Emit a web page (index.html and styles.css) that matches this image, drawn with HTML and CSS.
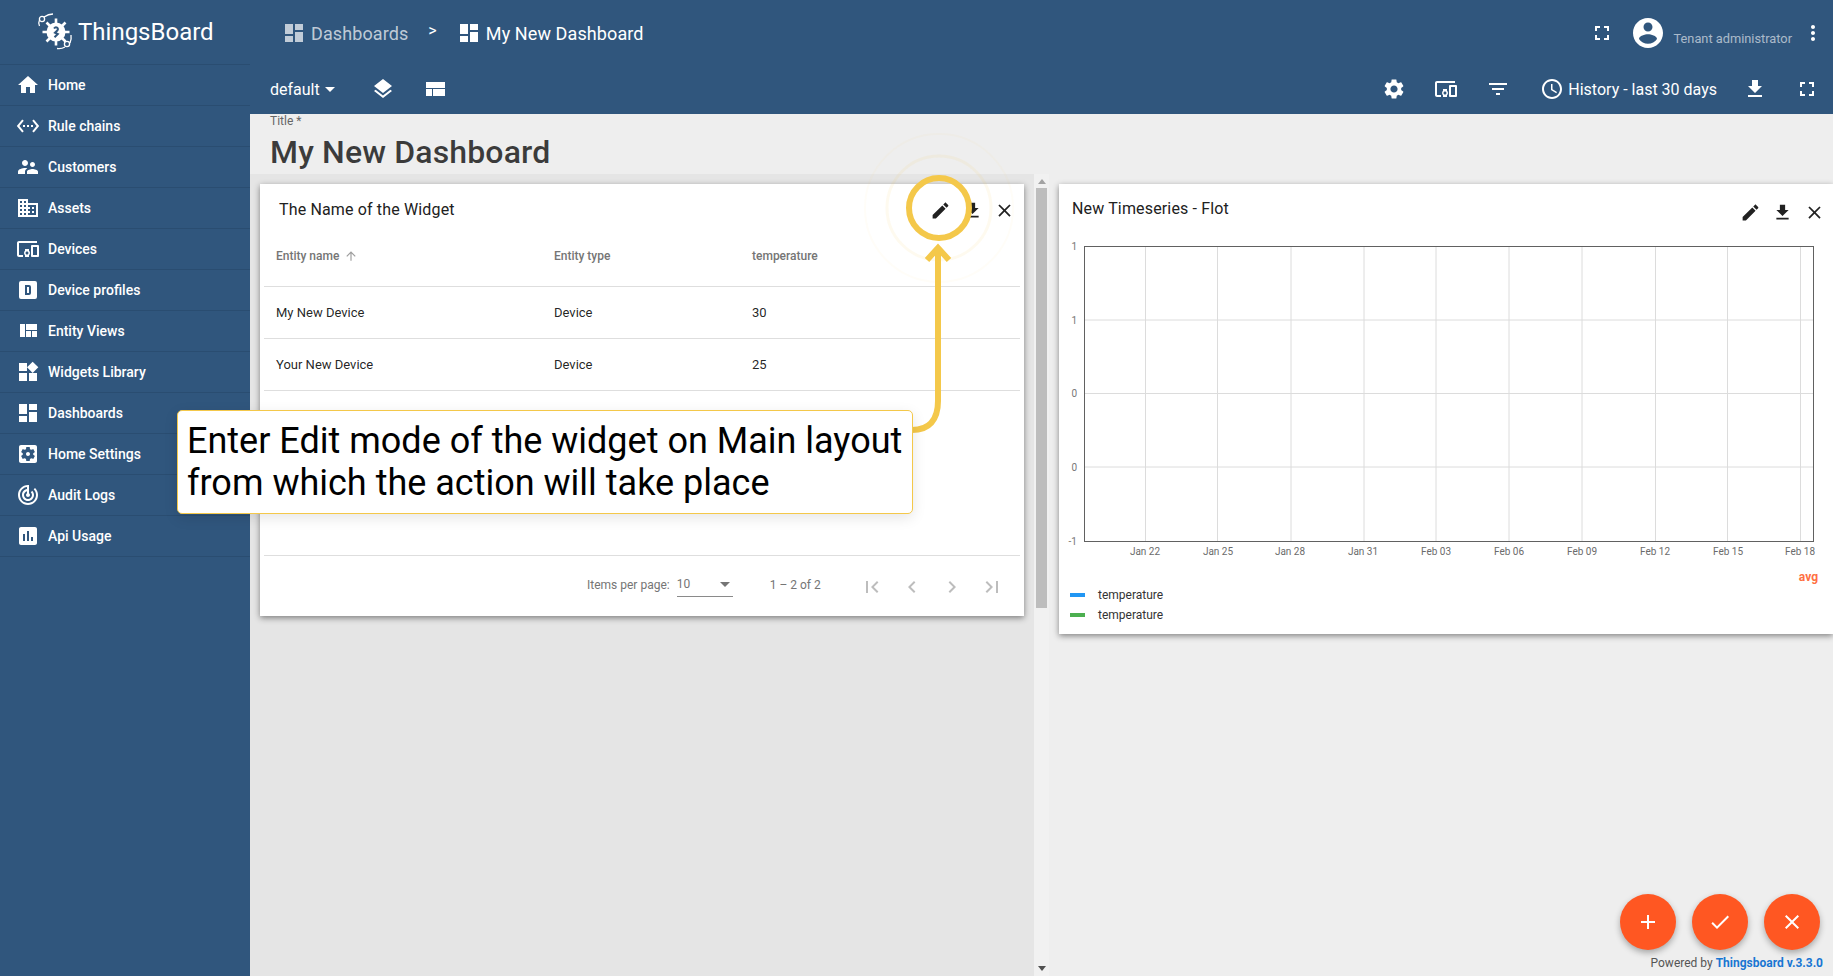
FILE: index.html
```html
<!DOCTYPE html>
<html lang="en">
<head>
  <meta charset="UTF-8">
  <title>ThingsBoard | My New Dashboard</title>
  <link rel="stylesheet" href="styles.css">
</head>
<body>

<svg class="sprite" xmlns="http://www.w3.org/2000/svg">
  <symbol id="i-home" viewBox="0 0 24 24"><path d="M10 20v-6h4v6h5v-8h3L12 3 2 12h3v8z"/></symbol>
  <symbol id="i-rule" viewBox="0 0 24 24"><path d="M7.77 6.76L6.23 5.48.82 12l5.41 6.52 1.54-1.28L3.42 12l4.35-5.24zM7 13h2v-2H7v2zm10-2h-2v2h2v-2zm-6 2h2v-2h-2v2zm6.77-7.52l-1.54 1.28L20.58 12l-4.35 5.24 1.54 1.28L23.18 12l-5.41-6.52z"/></symbol>
  <symbol id="i-customers" viewBox="0 0 24 24"><path d="M16.5 12c1.38 0 2.49-1.12 2.49-2.5S17.88 7 16.5 7C15.12 7 14 8.12 14 9.5s1.12 2.5 2.5 2.5zM9 11c1.66 0 2.99-1.34 2.99-3S10.66 5 9 5C7.34 5 6 6.34 6 8s1.34 3 3 3zm7.5 3c-1.83 0-5.5.92-5.5 2.75V19h11v-2.25c0-1.83-3.67-2.75-5.5-2.75zM9 13c-2.33 0-7 1.17-7 3.5V19h7v-2.25c0-.85.33-2.34 2.37-3.47C10.5 13.1 9.66 13 9 13z"/></symbol>
  <symbol id="i-domain" viewBox="0 0 24 24"><path d="M12 7V3H2v18h20V7H12zM6 19H4v-2h2v2zm0-4H4v-2h2v2zm0-4H4V9h2v2zm0-4H4V5h2v2zm4 12H8v-2h2v2zm0-4H8v-2h2v2zm0-4H8V9h2v2zm0-4H8V5h2v2zm10 12h-8v-2h2v-2h-2v-2h2v-2h-2V9h8v10zm-2-8h-2v2h2v-2zm0 4h-2v2h2v-2z"/></symbol>
  <symbol id="i-devices" viewBox="0 0 24 24"><path d="M3 6h18V4H3c-1.1 0-2 .9-2 2v12c0 1.1.9 2 2 2h4v-2H3V6zm10 6H9v1.78c-.61.55-1 1.33-1 2.22s.39 1.67 1 2.22V20h4v-1.78c.61-.55 1-1.34 1-2.22s-.39-1.67-1-2.22V12zm-2 5.5c-.83 0-1.5-.67-1.5-1.5s.67-1.5 1.5-1.5 1.5.67 1.5 1.5-.67 1.5-1.5 1.5zM22 8h-6c-.5 0-1 .5-1 1v10c0 .5.5 1 1 1h6c.5 0 1-.5 1-1V9c0-.5-.5-1-1-1zm-1 10h-4v-8h4v8z"/></symbol>
  <symbol id="i-profile" viewBox="0 0 24 24"><path fill-rule="evenodd" d="M9 7v10h4a2 2 0 0 0 2-2V9a2 2 0 0 0-2-2H9zm2 2h2v6h-2V9zM5 3h14a2 2 0 0 1 2 2v14a2 2 0 0 1-2 2H5a2 2 0 0 1-2-2V5a2 2 0 0 1 2-2z"/></symbol>
  <symbol id="i-quilt" viewBox="0 0 24 24"><path d="M10 18h5v-6h-5v6zm-6 0h5V5H4v13zm12 0h5v-6h-5v6zM10 5v6h11V5H10z"/></symbol>
  <symbol id="i-widgets" viewBox="0 0 24 24"><path d="M13 13v8h8v-8h-8zM3 21h8v-8H3v8zM3 3v8h8V3H3zm13.66-1.31L11 7.34 16.66 13l5.66-5.66-5.66-5.65z"/></symbol>
  <symbol id="i-dashboard" viewBox="0 0 24 24"><path d="M3 13h8V3H3v10zm0 8h8v-6H3v6zm10 0h8V11h-8v10zm0-18v6h8V3h-8z"/></symbol>
  <symbol id="i-home-settings" viewBox="0 0 24 24"><path d="M12 10c-1.1 0-2 .9-2 2s.9 2 2 2 2-.9 2-2-.9-2-2-2zm7-7H5c-1.11 0-2 .9-2 2v14c0 1.1.89 2 2 2h14c1.11 0 2-.9 2-2V5c0-1.1-.89-2-2-2zm-1.75 9c0 .23-.02.46-.05.68l1.48 1.16c.13.11.17.3.08.45l-1.4 2.42c-.09.15-.27.21-.43.15l-1.74-.7c-.36.28-.76.51-1.18.69l-.26 1.85c-.03.17-.18.3-.35.3h-2.8c-.17 0-.32-.13-.35-.29l-.26-1.85c-.43-.18-.82-.41-1.18-.69l-1.74.7c-.16.06-.34 0-.43-.15l-1.4-2.42c-.09-.15-.05-.34.08-.45l1.48-1.16c-.03-.23-.05-.46-.05-.69 0-.23.02-.46.05-.68l-1.48-1.16c-.13-.11-.17-.3-.08-.45l1.4-2.42c.09-.15.27-.21.43-.15l1.74.7c.36-.28.76-.51 1.18-.69l.26-1.85c.03-.17.18-.3.35-.3h2.8c.17 0 .32.13.35.29l.26 1.85c.43.18.82.41 1.18.69l1.74-.7c.16-.06.34 0 .43.15l1.4 2.42c.09.15.05.34-.08.45l-1.48 1.16c.03.23.05.46.05.69z"/></symbol>
  <symbol id="i-audit" viewBox="0 0 24 24"><path d="M19.07 4.93l-1.41 1.41C19.1 7.79 20 9.79 20 12c0 4.42-3.58 8-8 8s-8-3.58-8-8c0-4.08 3.05-7.44 7-7.93v2.02C8.16 6.57 6 9.03 6 12c0 3.31 2.69 6 6 6s6-2.69 6-6c0-1.66-.67-3.16-1.76-4.24l-1.41 1.41C15.55 9.9 16 10.9 16 12c0 2.21-1.79 4-4 4s-4-1.79-4-4c0-1.86 1.28-3.41 3-3.86v2.14c-.6.35-1 .98-1 1.72 0 1.1.9 2 2 2s2-.9 2-2c0-.74-.4-1.38-1-1.72V2h-1C6.48 2 2 6.48 2 12s4.48 10 10 10 10-4.48 10-10c0-2.76-1.12-5.26-2.93-7.07z"/></symbol>
  <symbol id="i-usage" viewBox="0 0 24 24"><path d="M19 3H5c-1.1 0-2 .9-2 2v14c0 1.1.9 2 2 2h14c1.1 0 2-.9 2-2V5c0-1.1-.9-2-2-2zM9 17H7v-7h2v7zm4 0h-2V7h2v10zm4 0h-2v-4h2v4z"/></symbol>
  <symbol id="i-fullscreen" viewBox="0 0 24 24"><path d="M7 14H5v5h5v-2H7v-3zm-2-4h2V7h3V5H5v5zm12 7h-3v2h5v-5h-2v3zM14 5v2h3v3h2V5h-5z"/></symbol>
  <symbol id="i-account" viewBox="0 0 24 24"><path d="M12 2C6.48 2 2 6.48 2 12s4.48 10 10 10 10-4.48 10-10S17.52 2 12 2zm0 3c1.66 0 3 1.34 3 3s-1.34 3-3 3-3-1.34-3-3 1.34-3 3-3zm0 14.2c-2.5 0-4.71-1.28-6-3.22.03-1.99 4-3.08 6-3.08 1.99 0 5.97 1.09 6 3.08-1.29 1.94-3.5 3.22-6 3.22z"/></symbol>
  <symbol id="i-more" viewBox="0 0 24 24"><path d="M12 8c1.1 0 2-.9 2-2s-.9-2-2-2-2 .9-2 2 .9 2 2 2zm0 2c-1.1 0-2 .9-2 2s.9 2 2 2 2-.9 2-2-.9-2-2-2zm0 6c-1.1 0-2 .9-2 2s.9 2 2 2 2-.9 2-2-.9-2-2-2z"/></symbol>
  <symbol id="i-settings" viewBox="0 0 24 24"><path d="M19.14 12.94c.04-.3.06-.61.06-.94 0-.32-.02-.64-.07-.94l2.03-1.58c.18-.14.23-.41.12-.61l-1.92-3.32c-.12-.22-.37-.29-.59-.22l-2.39.96c-.5-.38-1.03-.7-1.62-.94L14.4 2.81c-.04-.24-.24-.41-.48-.41h-3.84c-.24 0-.43.17-.47.41L9.25 5.35c-.59.24-1.13.57-1.62.94l-2.39-.96c-.22-.08-.47 0-.59.22L2.74 8.87c-.12.21-.08.47.12.61l2.03 1.58c-.05.3-.09.63-.09.94s.02.64.07.94l-2.03 1.58c-.18.14-.23.41-.12.61l1.92 3.32c.12.22.37.29.59.22l2.39-.96c.5.38 1.03.7 1.62.94l.36 2.54c.05.24.24.41.48.41h3.84c.24 0 .44-.17.47-.41l.36-2.54c.59-.24 1.13-.56 1.62-.94l2.39.96c.22.08.47 0 .59-.22l1.92-3.32c.12-.22.07-.47-.12-.61l-2.01-1.58zM12 15.6c-1.98 0-3.6-1.62-3.6-3.6s1.62-3.6 3.6-3.6 3.6 1.62 3.6 3.6-1.62 3.6-3.6 3.6z"/></symbol>
  <symbol id="i-filter" viewBox="0 0 24 24"><path d="M10 18h4v-2h-4v2zM3 6v2h18V6H3zm3 7h12v-2H6v2z"/></symbol>
  <symbol id="i-schedule" viewBox="0 0 24 24"><path d="M11.99 2C6.47 2 2 6.48 2 12s4.47 10 9.99 10C17.52 22 22 17.52 22 12S17.52 2 11.99 2zM12 20c-4.42 0-8-3.58-8-8s3.58-8 8-8 8 3.58 8 8-3.58 8-8 8zm.5-13H11v6l5.25 3.15.75-1.23-4.5-2.67z"/></symbol>
  <symbol id="i-download" viewBox="0 0 24 24"><path d="M19 9h-4V3H9v6H5l7 7 7-7zM5 18v2h14v-2H5z"/></symbol>
  <symbol id="i-edit" viewBox="0 0 24 24"><path d="M3 17.25V21h3.75L17.81 9.94l-3.75-3.75L3 17.25zM20.71 7.04c.39-.39.39-1.02 0-1.41l-2.34-2.34c-.39-.39-1.02-.39-1.41 0l-1.83 1.83 3.75 3.75 1.83-1.83z"/></symbol>
  <symbol id="i-close" viewBox="0 0 24 24"><path d="M19 6.41L17.59 5 12 10.59 6.41 5 5 6.41 10.59 12 5 17.59 6.41 19 12 13.41 17.59 19 19 17.59 13.41 12z"/></symbol>
  <symbol id="i-layers" viewBox="0 0 24 24"><path d="M11.99 18.54l-7.37-5.73L3 14.07l9 7 9-7-1.63-1.27-7.38 5.74zM12 16l7.36-5.73L21 9l-9-7-9 7 1.63 1.27L12 16z"/></symbol>
  <symbol id="i-compact" viewBox="0 0 24 24"><path d="M3 19h6v-7H3v7zm7 0h12v-7H10v7zM3 5v6h19V5H3z"/></symbol>
  <symbol id="i-up" viewBox="0 0 24 24"><path d="M4 12l1.41 1.41L11 7.83V20h2V7.83l5.58 5.59L20 12l-8-8-8 8z"/></symbol>
  <symbol id="i-first" viewBox="0 0 24 24"><path d="M18.41 16.59L13.82 12l4.59-4.59L17 6l-6 6 6 6zM6 6h2v12H6z"/></symbol>
  <symbol id="i-prev" viewBox="0 0 24 24"><path d="M15.41 7.41L14 6l-6 6 6 6 1.41-1.41L10.83 12z"/></symbol>
  <symbol id="i-next" viewBox="0 0 24 24"><path d="M10 6L8.59 7.41 13.17 12l-4.58 4.59L10 18l6-6z"/></symbol>
  <symbol id="i-last" viewBox="0 0 24 24"><path d="M5.59 7.41L10.18 12l-4.59 4.59L7 18l6-6-6-6zM16 6h2v12h-2z"/></symbol>
  <symbol id="i-add" viewBox="0 0 24 24"><path d="M19 13h-6v6h-2v-6H5v-2h6V5h2v6h6v2z"/></symbol>
  <symbol id="i-check" viewBox="0 0 24 24"><path d="M9 16.17L4.83 12l-1.42 1.41L9 19 21 7l-1.41-1.41z"/></symbol>
</svg>

<div class="app">

  <aside class="sidebar">
    <div class="logo">
      <svg class="logo-mark" viewBox="0 0 38 38" fill="none" stroke="#fff">
        <circle cx="19" cy="19" r="9.500" fill="#fff" stroke="none"/>
        <path stroke-width="2.600" d="M19 5.500v5M19 27.500v5M5.500 19h5M27.500 19h5M9.500 9.500l3.500 3.500M25 25l3.500 3.500M28.500 9.500L25 13M13 25l-3.500 3.500"/>
        <path stroke="#30567d" stroke-width="2" d="M17 15.500c2-2.500 5-.5 3.500 1.800l-2.500 2.400 2.800 1.300-3.300 3.300"/>
        <circle cx="5" cy="6" r="2.600" stroke-width="1.300"/>
        <path stroke-width="1.300" d="M2.500 7c-1 2-1 4 0 6M7 4c3-2 6-3 9-3"/>
        <circle cx="30" cy="31" r="2.600" stroke-width="1.300"/>
        <path stroke-width="1.300" d="M33 30c1-2.500 1.500-5 1-8M28 34c-2.500 1.500-5 2-8 1.500"/>
      </svg>
      <span class="logo-text">ThingsBoard</span>
    </div>
    <nav>
      <a class="nav-item"><svg class="icon"><use href="#i-home"/></svg>Home</a>
      <a class="nav-item"><svg class="icon"><use href="#i-rule"/></svg>Rule chains</a>
      <a class="nav-item"><svg class="icon"><use href="#i-customers"/></svg>Customers</a>
      <a class="nav-item"><svg class="icon"><use href="#i-domain"/></svg>Assets</a>
      <a class="nav-item"><svg class="icon"><use href="#i-devices"/></svg>Devices</a>
      <a class="nav-item"><svg class="icon"><use href="#i-profile"/></svg>Device profiles</a>
      <a class="nav-item"><svg class="icon"><use href="#i-quilt"/></svg>Entity Views</a>
      <a class="nav-item"><svg class="icon"><use href="#i-widgets"/></svg>Widgets Library</a>
      <a class="nav-item"><svg class="icon"><use href="#i-dashboard"/></svg>Dashboards</a>
      <a class="nav-item"><svg class="icon"><use href="#i-home-settings"/></svg>Home Settings</a>
      <a class="nav-item"><svg class="icon"><use href="#i-audit"/></svg>Audit Logs</a>
      <a class="nav-item"><svg class="icon"><use href="#i-usage"/></svg>Api Usage</a>
    </nav>
  </aside>

  <main class="main">
    <header class="topbar">
      <div class="crumbs">
        <svg class="icon crumb-dim"><use href="#i-dashboard"/></svg>
        <span class="crumb-dim">Dashboards</span>
        <span class="crumb-sep">&gt;</span>
        <svg class="icon"><use href="#i-dashboard"/></svg>
        <span>My New Dashboard</span>
      </div>
      <div class="user-box">
        <svg class="icon"><use href="#i-fullscreen"/></svg>
        <svg class="icon avatar"><use href="#i-account"/></svg>
        <span class="user-role">Tenant administrator</span>
        <svg class="icon"><use href="#i-more"/></svg>
      </div>
    </header>

    <div class="toolbar">
      <div class="toolbar-left">
        <span class="state">default<i class="caret"></i></span>
        <svg class="icon layers-btn"><use href="#i-layers"/></svg>
        <svg class="icon layout-btn"><use href="#i-compact"/></svg>
      </div>
      <div class="toolbar-right">
        <svg class="icon"><use href="#i-settings"/></svg>
        <svg class="icon"><use href="#i-devices"/></svg>
        <svg class="icon"><use href="#i-filter"/></svg>
        <span class="history"><svg class="icon"><use href="#i-schedule"/></svg>History - last 30 days</span>
        <svg class="icon"><use href="#i-download"/></svg>
        <svg class="icon"><use href="#i-fullscreen"/></svg>
      </div>
    </div>

    <div class="title-box">
      <label>Title *</label>
      <h1>My New Dashboard</h1>
    </div>

    <div class="layouts">
      <section class="layout-main">
        <div class="widget widget-table">
          <div class="widget-head">
            <span class="widget-title">The Name of the Widget</span>
            <div class="widget-actions">
              <svg class="icon"><use href="#i-edit"/></svg>
              <svg class="icon"><use href="#i-download"/></svg>
              <svg class="icon"><use href="#i-close"/></svg>
            </div>
          </div>
          <div class="table">
            <div class="row row-head">
              <span class="col-name">Entity name<svg class="icon sort"><use href="#i-up"/></svg></span>
              <span class="col-type">Entity type</span>
              <span>temperature</span>
            </div>
            <div class="row">
              <span class="col-name">My New Device</span>
              <span class="col-type">Device</span>
              <span>30</span>
            </div>
            <div class="row">
              <span class="col-name">Your New Device</span>
              <span class="col-type">Device</span>
              <span>25</span>
            </div>
          </div>
          <div class="paginator">
            <span>Items per page:</span>
            <span class="page-select">10<i class="caret"></i></span>
            <span class="page-range">1 – 2 of 2</span>
            <svg class="icon"><use href="#i-first"/></svg>
            <svg class="icon"><use href="#i-prev"/></svg>
            <svg class="icon"><use href="#i-next"/></svg>
            <svg class="icon"><use href="#i-last"/></svg>
          </div>
        </div>
      </section>

      <div class="scrollbar">
        <i class="scroll-up"></i>
        <div class="scroll-thumb"></div>
        <i class="scroll-down"></i>
      </div>

      <section class="layout-right">
        <div class="widget widget-chart">
          <div class="widget-head">
            <span class="widget-title">New Timeseries - Flot</span>
            <div class="widget-actions">
              <svg class="icon"><use href="#i-edit"/></svg>
              <svg class="icon"><use href="#i-download"/></svg>
              <svg class="icon"><use href="#i-close"/></svg>
            </div>
          </div>
          <svg class="chart" width="774" height="330" viewBox="1059 235 774 330">
            <g class="grid">
              <path d="M1084 320H1813M1084 393.500H1813M1084 467H1813"/>
              <path d="M1145.500 246V541M1217.500 246V541M1291 246V541M1364 246V541M1436 246V541M1509 246V541M1582 246V541M1655.500 246V541M1727.500 246V541M1800.500 246V541"/>
            </g>
            <rect class="plot" x="1084.500" y="246.500" width="729" height="295"/>
            <g class="y-labels">
              <text x="1077" y="250">1</text>
              <text x="1077" y="324">1</text>
              <text x="1077" y="397">0</text>
              <text x="1077" y="471">0</text>
              <text x="1077" y="545">-1</text>
            </g>
            <g class="x-labels">
              <text x="1145" y="555">Jan 22</text>
              <text x="1218" y="555">Jan 25</text>
              <text x="1290" y="555">Jan 28</text>
              <text x="1363" y="555">Jan 31</text>
              <text x="1436" y="555">Feb 03</text>
              <text x="1509" y="555">Feb 06</text>
              <text x="1582" y="555">Feb 09</text>
              <text x="1655" y="555">Feb 12</text>
              <text x="1728" y="555">Feb 15</text>
              <text x="1800" y="555">Feb 18</text>
            </g>
          </svg>
          <div class="avg">avg</div>
          <ul class="legend">
            <li><i class="swatch swatch-blue"></i>temperature</li>
            <li><i class="swatch swatch-green"></i>temperature</li>
          </ul>
        </div>
      </section>
    </div>
  </main>
</div>

<div class="fabs">
  <button class="fab"><svg class="icon"><use href="#i-add"/></svg></button>
  <button class="fab"><svg class="icon"><use href="#i-check"/></svg></button>
  <button class="fab"><svg class="icon"><use href="#i-close"/></svg></button>
</div>
<div class="powered">Powered by <b>Thingsboard v.3.3.0</b></div>

<!-- annotation over the page -->
<svg class="marker" width="200" height="340" viewBox="0 0 200 340" fill="none">
  <circle class="halo-far" cx="100" cy="100" r="74"/>
  <circle class="halo-near" cx="100" cy="100" r="52"/>
  <circle class="ring" cx="100" cy="100" r="30"/>
  <path class="arrow" d="M99 142V293C99 312 90 322 73 322"/>
  <path class="arrow" d="M88 152L99 140L110 152"/>
</svg>
<div class="callout">Enter Edit mode of the widget on Main layout<br>from which the action will take place</div>

</body>
</html>
```

FILE: styles.css
```css
* {
  box-sizing: border-box;
}

html, body {
  height: 100%;
}

body {
  margin: 0;
  overflow: hidden;
  font-family: Roboto, "Liberation Sans", sans-serif;
  color: #212121;
  background: #eee;
}

.sprite {
  display: none;
}

.icon {
  width: 24px;
  height: 24px;
  flex: none;
  fill: currentColor;
}

.app {
  display: flex;
  height: 976px;
}

/* sidebar */
.sidebar {
  width: 250px;
  flex: none;
  background: #30567d;
  color: #fff;
}

.logo {
  height: 65px;
  display: flex;
  align-items: center;
  padding-left: 37px;
  border-bottom: 1px solid #2a4d71;
}

.logo-mark {
  width: 38px;
  height: 38px;
  margin-right: 3px;
}

.logo-text {
  font-size: 24px;
  font-weight: 400;
}

.nav-item {
  height: 41px;
  display: flex;
  align-items: center;
  gap: 8px;
  padding-left: 16px;
  font-size: 14px;
  font-weight: 500;
  border-bottom: 1px solid #2a4d71;
}

/* top bars */
.main {
  flex: 1;
  min-width: 0;
  display: flex;
  flex-direction: column;
}

.topbar {
  height: 64px;
  flex: none;
  display: flex;
  justify-content: space-between;
  align-items: center;
  background: #30567d;
  color: #fff;
  padding: 2px 8px 0 32px;
}

.crumbs {
  display: flex;
  align-items: center;
  gap: 5px;
  font-size: 18px;
  letter-spacing: 0.1px;
}

.crumb-dim {
  color: rgba(255, 255, 255, 0.7);
}

.crumb-sep {
  margin: -6px 15px 0 15px;
  font-size: 16px;
}

.user-box {
  display: flex;
  align-items: center;
}

.avatar {
  width: 36px;
  height: 36px;
  margin-left: 16px;
}

.user-role {
  font-size: 12.800px;
  color: rgba(255, 255, 255, 0.6);
  margin: 10px 9px 0 8px;
}

.toolbar {
  height: 50px;
  flex: none;
  display: flex;
  justify-content: space-between;
  align-items: center;
  background: #30567d;
  color: #fff;
  padding: 0 14px 0 20px;
}

.toolbar-left,
.toolbar-right {
  display: flex;
  align-items: center;
}

.toolbar-right {
  gap: 28px;
}

.state {
  font-size: 16px;
  display: flex;
  align-items: center;
}

.state .caret {
  margin-left: 5px;
  border-left: 5px solid transparent;
  border-right: 5px solid transparent;
  border-top: 5px solid #fff;
}

.layers-btn {
  margin-left: 36px;
}

.layout-btn {
  margin-left: 28px;
}

.history {
  display: flex;
  align-items: center;
  gap: 4px;
  margin: 0 -2px 0 2px;
  font-size: 16px;
}

/* title */
.title-box {
  height: 60px;
  flex: none;
  padding-left: 20px;
}

.title-box label {
  display: block;
  font-size: 12px;
  color: #666;
  line-height: 14px;
}

.title-box h1 {
  margin: 5px 0 0;
  font-size: 32px;
  font-weight: 500;
  line-height: 38px;
  letter-spacing: 0.15px;
  color: rgba(0, 0, 0, 0.76);
}

/* widget layouts */
.layouts {
  flex: 1;
  min-height: 0;
  display: flex;
}

.layout-main {
  width: 784px;
  flex: none;
  background: #e5e5e5;
  padding: 10px;
}

.scrollbar {
  width: 15px;
  flex: none;
  background: #f1f1f1;
  display: flex;
  flex-direction: column;
  align-items: center;
}

.scroll-up,
.scroll-down {
  width: 0;
  height: 0;
  border-left: 4px solid transparent;
  border-right: 4px solid transparent;
}

.scroll-up {
  margin: 5px 0 4px;
  border-bottom: 5px solid #a3a3a3;
}

.scroll-down {
  margin: auto 0 5px;
  border-top: 5px solid #505050;
}

.scroll-thumb {
  width: 11px;
  height: 420px;
  background: #bdbdbd;
}

.layout-right {
  flex: 1;
  min-width: 0;
  padding: 10px 0 0 10px;
}

.widget {
  background: #fff;
  box-shadow: 0 2px 6px rgba(0, 0, 0, 0.45);
}

.widget-table {
  height: 432px;
  padding: 0 4px;
  display: flex;
  flex-direction: column;
}

.widget-chart {
  height: 450px;
}

.widget-head {
  display: flex;
  justify-content: space-between;
  align-items: center;
}

.widget-table .widget-head {
  height: 50px;
  padding: 0 5px 0 15px;
}

.widget-chart .widget-head {
  height: 51px;
  padding: 0 8px 0 13px;
}

.widget-chart .widget-title {
  margin-top: -2px;
}

.widget-title {
  font-size: 16px;
  letter-spacing: 0.15px;
}

.widget-actions {
  display: flex;
  gap: 11px;
  color: #212121;
}

.widget-table .widget-actions {
  margin-top: 2px;
}

.widget-chart .widget-actions {
  margin-top: 6px;
}

.widget-actions .icon {
  width: 21px;
  height: 21px;
}

.table {
  flex: 1;
  font-size: 13px;
  color: rgba(0, 0, 0, 0.87);
  border-bottom: 1px solid #dedede;
}

.row {
  height: 52px;
  display: flex;
  align-items: center;
  padding-left: 12px;
  border-bottom: 1px solid #dedede;
}

.row-head {
  height: 53px;
  padding-bottom: 9px;
  font-size: 12px;
  font-weight: 500;
  color: #757575;
}

.col-name {
  width: 278px;
  display: flex;
  align-items: center;
}

.col-type {
  width: 198px;
}

.sort {
  width: 14px;
  height: 14px;
  margin-left: 5px;
  color: #9e9e9e;
}

.paginator {
  height: 60px;
  flex: none;
  display: flex;
  align-items: center;
  padding: 0 0 3px 323px;
  font-size: 12px;
  color: #757575;
}

.page-select {
  width: 56px;
  height: 24px;
  margin-left: 7px;
  display: flex;
  align-items: center;
  justify-content: space-between;
  border-bottom: 1px solid #8a8a8a;
  padding: 0 3px 0 0;
}

.page-select .caret {
  border-left: 5px solid transparent;
  border-right: 5px solid transparent;
  border-top: 5px solid #757575;
}

.page-range {
  margin: 0 39px 0 37px;
}

.paginator .icon {
  width: 24px;
  height: 24px;
  margin-right: 16px;
  margin-top: 4px;
  color: #bdbdbd;
}

/* chart */
.chart {
  display: block;
  margin-bottom: 5px;
}

.grid path {
  fill: none;
  stroke: #dcdcdc;
  stroke-width: 1;
}

.plot {
  fill: none;
  stroke: #616161;
  stroke-width: 1;
}

.y-labels text {
  font-size: 10px;
  fill: #777;
  text-anchor: end;
}

.x-labels text {
  font-size: 10px;
  fill: #6b6b6b;
  text-anchor: middle;
}

.avg {
  text-align: right;
  padding-right: 15px;
  font-size: 12px;
  font-weight: 700;
  line-height: 14px;
  color: #ff7043;
}

.legend {
  list-style: none;
  margin: 1px 0 0;
  padding: 0 0 0 11px;
  font-size: 12px;
  color: #333;
}

.legend li {
  height: 20px;
  display: flex;
  align-items: center;
}

.swatch {
  width: 15px;
  height: 4px;
  margin-right: 13px;
}

.swatch-blue {
  background: #2196f3;
}

.swatch-green {
  background: #4caf50;
}

/* floating stuff */
.fabs {
  position: absolute;
  right: 13px;
  top: 894px;
  display: flex;
  gap: 16px;
}

.fab {
  width: 56px;
  height: 56px;
  padding: 0;
  border: none;
  border-radius: 50%;
  background: #ff5722;
  color: #fff;
  display: flex;
  align-items: center;
  justify-content: center;
  box-shadow: 0 3px 6px rgba(0, 0, 0, 0.3);
}

.powered {
  position: absolute;
  right: 10px;
  top: 956px;
  font-size: 12px;
  line-height: 14px;
  color: #555;
}

.powered b {
  color: #1976d2;
  font-weight: 700;
}

.marker {
  position: absolute;
  left: 839px;
  top: 108px;
}

.ring {
  stroke: #f4c84a;
  stroke-width: 6;
}

.halo-near {
  stroke: rgba(244, 200, 74, 0.09);
  stroke-width: 3;
}

.halo-far {
  stroke: rgba(244, 200, 74, 0.04);
  stroke-width: 2;
}

.arrow {
  stroke: #f4c84a;
  stroke-width: 6;
  fill: none;
}

.callout {
  position: absolute;
  left: 177px;
  top: 410px;
  width: 736px;
  height: 104px;
  padding: 9px;
  background: #fff;
  border: 1px solid #f4c84a;
  border-radius: 5px;
  box-shadow: 0 4px 14px rgba(0, 0, 0, 0.1);
  font-size: 36px;
  line-height: 42px;
  color: #000;
  white-space: nowrap;
}
```
